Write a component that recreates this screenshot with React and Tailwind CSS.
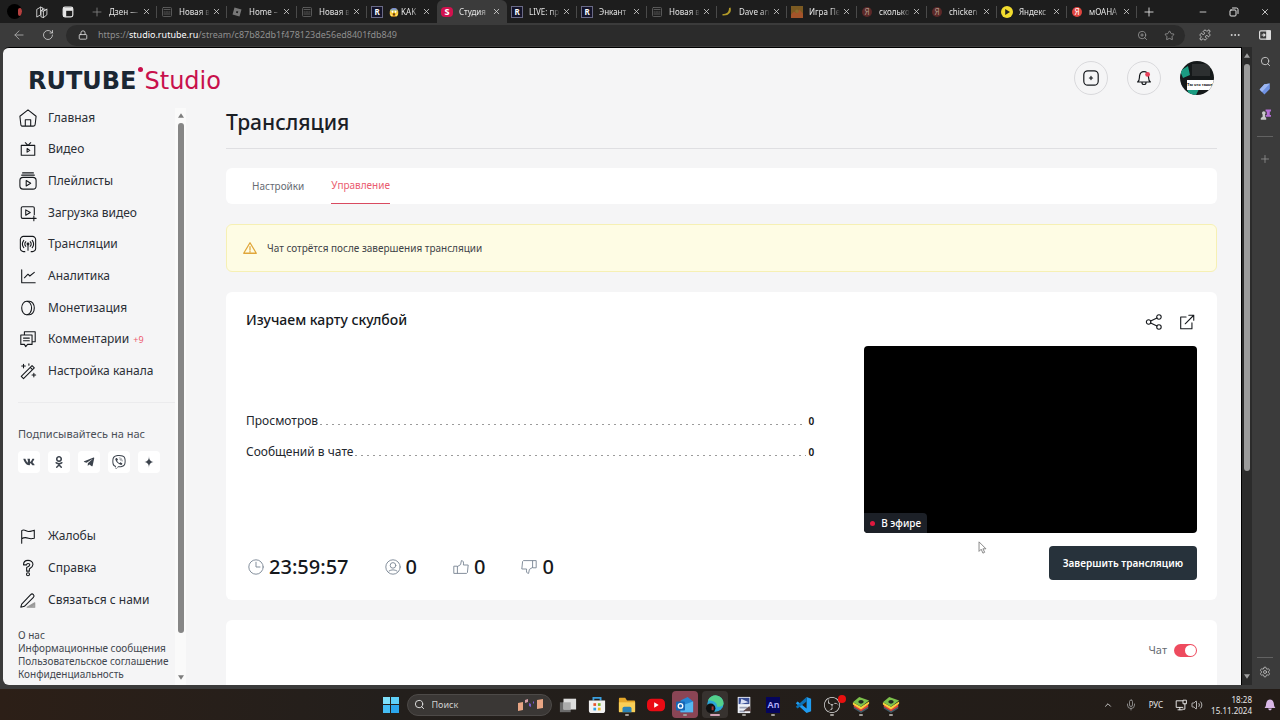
import { FaVk, FaOdnoklassniki, FaTelegramPlane, FaViber } from "react-icons/fa";
import { SiObsstudio } from "react-icons/si";
import {
  ArrowLeft,
  ChevronUp,
  Lock,
  Mic,
  Minus,
  MoreHorizontal,
  Plus,
  Puzzle,
  RotateCw,
  Search,
  Settings,
  Star,
  Volume2,
  X,
  ZoomIn,
} from "lucide-react";

function Icon({ children, className = "size-5", stroke = 1.2 }) {
  return (
    <svg
      viewBox="0 0 20 20"
      className={className}
      fill="none"
      stroke="currentColor"
      strokeWidth={stroke}
      strokeLinejoin="round"
      strokeLinecap="round"
      aria-hidden="true"
    >
      {children}
    </svg>
  );
}

const favicons = {
  dzen: (
    <Icon className="size-2.5 text-[#888]" stroke={1.6}>
      <path d="M10 2v16M2 10h16" />
    </Icon>
  ),
  blank: (
    <Icon className="size-2.5 text-[#666]" stroke={1.6}>
      <rect x="1" y="1" width="18" height="18" rx="2" />
      <path d="M4 5h12M4 10h2M8 10h4M14 10h2M4 14h12" />
    </Icon>
  ),
  roblox: (
    <svg viewBox="0 0 20 20" className="size-2.5" fill="#777" aria-hidden="true">
      <path fillRule="evenodd" d="M5 1l14 4-4 14-14-4zM9 8l-1 3.500 3.500 1 1-3.500z" />
    </svg>
  ),
  rutube: (
    <span className="flex size-3 items-center justify-center border border-[#6a6a86] bg-[#14142b] text-[8px] leading-none font-bold text-white">
      R
    </span>
  ),
  studio: (
    <span className="flex h-2.5 w-3 items-center justify-center rounded-sm bg-[#d2124e] text-[9px] leading-none font-extrabold text-white">
      S
    </span>
  ),
  banana: (
    <svg viewBox="0 0 20 20" className="size-2.5" fill="#b29a28" aria-hidden="true">
      <path d="M17 1c3 9-3 17-16 16v-3c8 0 13-3 13-12z" />
    </svg>
  ),
  game: (
    <svg viewBox="0 0 20 20" className="size-3" aria-hidden="true">
      <path d="M0 0h20v20H0z" fill="#7b5a22" />
      <path d="M0 14l5-5 4 3 5-6 6 7v7H0z" fill="#a4542a" />
      <circle cx="10" cy="9" r="3" fill="#8a6a2c" />
    </svg>
  ),
  yandexDim: (
    <span className="flex size-2.5 items-center justify-center rounded-full bg-[#5c2828] text-[8px] leading-none text-[#a98]">
      Я
    </span>
  ),
  yandex: (
    <span className="flex size-2.5 items-center justify-center rounded-full bg-[#e0443e] text-[8px] leading-none text-white">
      Я
    </span>
  ),
  music: (
    <svg viewBox="0 0 20 20" className="size-3" aria-hidden="true">
      <circle cx="10" cy="10" r="10" fill="#f2dc2e" />
      <path d="M7 5l8 5-8 5z" fill="#222" />
    </svg>
  ),
};

const tabs = [
  { icon: "dzen", title: "Дзен —" },
  { icon: "blank", title: "Новая в" },
  { icon: "roblox", title: "Home –" },
  { icon: "blank", title: "Новая в" },
  { icon: "rutube", title: "😱 KAK" },
  { icon: "studio", title: "Студия", active: true },
  { icon: "rutube", title: "LIVE: пр" },
  { icon: "rutube", title: "Энкант" },
  { icon: "blank", title: "Новая в" },
  { icon: "banana", title: "Dave an" },
  { icon: "game", title: "Игра Пе" },
  { icon: "yandexDim", title: "сколько" },
  { icon: "yandexDim", title: "chicken" },
  { icon: "music", title: "Яндекс" },
  { icon: "yandex", title: "мОАНА" },
];

const navItems = [
  {
    label: "Главная",
    icon: <path d="M3 19a2 2 0 0 1-1-2L1 8l9-7 9 7-1 9a2 2 0 0 1-2 2zM7 19v-7h6v7" />,
  },
  {
    label: "Видео",
    icon: <path d="M2.500 6h15v11h-15zM7 3l3 3 3-3M9 9.500l3 2-3 2z" />,
  },
  {
    label: "Плейлисты",
    icon: (
      <>
        <path d="M4 1h12M3 3.500h14M8 9.500l5 3-5 3z" />
        <rect x="1" y="6" width="18" height="13" rx="3.500" />
      </>
    ),
  },
  {
    label: "Загрузка видео",
    icon: <path d="M13 16H4a1.500 1.500 0 0 1-1.500-1.500v-10A1.500 1.500 0 0 1 4 3h11.500A1.500 1.500 0 0 1 17 4.500V12M7.500 6.500l5 3-5 3zM16.500 13.500v5M14 16h5" />,
  },
  {
    label: "Трансляции",
    icon: (
      <>
        <path d="M6.500 18.500H5A3.500 3.500 0 0 1 1.500 15V5A3.500 3.500 0 0 1 5 1.500h10A3.500 3.500 0 0 1 18.500 5v10a3.500 3.500 0 0 1-3.500 3.500h-1.500" />
        <path d="M7.500 12.500a3.500 3.500 0 0 1 0-5M12.500 7.500a3.500 3.500 0 0 1 0 5M5.300 14a6.500 6.500 0 0 1 0-8M14.700 6a6.500 6.500 0 0 1 0 8M10 11v6" />
        <circle cx="10" cy="10" r="1" />
      </>
    ),
  },
  {
    label: "Аналитика",
    icon: <path d="M3 3v14.500h15M6 12l4-4 2 2 5-4" />,
  },
  {
    label: "Монетизация",
    icon: (
      <>
        <ellipse cx="8.500" cy="10" rx="5.500" ry="7.500" />
        <path d="M9 2.500h2.500c3 0 5.500 3 5.500 7.500s-2.500 7.500-5.500 7.500H9" />
      </>
    ),
  },
  {
    label: "Комментарии",
    badge: "+9",
    icon: <path d="M6 5.500V2h12v11h-3.500M2 5.500h12.500V16H9.500L7.500 18.500 6 16H2zM5 9h6.500M5 12h6.500" />,
  },
  {
    label: "Настройка канала",
    icon: <path d="M2.500 16L14.500 4 17 6.500 5 18.500zM12.500 6l2.500 2.500M5 2.500v4M3 4.500h4M11 2v1.500M16.500 12.500v4M14.500 14.500h4" />,
  },
];

const helpItems = [
  { label: "Жалобы", icon: <path d="M3 18V4c3-2 5 1 7.500 1S15 4 17 3.500v9c-2 .5-4 1-6.500 0S6 11 3 13" /> },
  {
    label: "Справка",
    icon: (
      <>
        <path d="M5 6.500C5 3.500 7 1.500 10 1.500s5.500 2 5.500 4.500S13 10 11.500 11v2.500h-3v-4C11 8.500 12 8 12 6.500S11.500 5 10 5 8.500 5.500 8.500 6.500z" />
        <circle cx="10" cy="17" r="1.700" />
      </>
    ),
  },
  {
    label: "Связаться с нами",
    icon: (
      <>
        <path d="M3 14.500L13 4a2 2 0 0 1 3 3L6 17l-4 1z" />
        <path d="M9 18h8.500v-5zM13 17.500l4-3" fill="#aaa" stroke="#999" />
      </>
    ),
  },
];

const footerLinks = ["О нас", "Информационные сообщения", "Пользовательское соглашение", "Конфиденциальность"];

const socials = [
  { name: "VK", icon: <FaVk className="size-3" /> },
  { name: "OK", icon: <FaOdnoklassniki className="size-3" /> },
  { name: "Telegram", icon: <FaTelegramPlane className="size-3" /> },
  { name: "Viber", icon: <FaViber className="size-3.5" /> },
  {
    name: "Dzen",
    icon: (
      <svg viewBox="0 0 20 20" className="size-3" fill="currentColor" aria-hidden="true">
        <path d="M10 0c0 7-3 10-10 10 7 0 10 3 10 10 0-7 3-10 10-10-7 0-10-3-10-10z" />
      </svg>
    ),
  },
];

const counters = [
  { label: "Зрители", icon: <><circle cx="10" cy="10" r="9" /><circle cx="10" cy="8" r="3.500" /><path d="M5 15c3-2 7-2 10 0" /></> },
  { label: "Нравится", icon: <path d="M1.500 9h4v9h-4zM5.500 9.500L9.500 7l1-5c2.500 0 3 2 2.500 5.500h6L18 17l-1 1H5.500" /> },
  { label: "Не нравится", icon: <path d="M18.500 11h-4V2h4zM14.500 10.500L10.500 13l-1 5C7 18 6.500 16 7 12.500H1L2 3l1-1h11.500" /> },
];

function TabStrip() {
  return (
    <div className="flex h-[23px] shrink-0 items-stretch bg-[#1d1d1d] text-[#e6e6e6]">
      <div className="flex w-[87px] shrink-0 items-center gap-[13px] pl-[7px]">
        <span className="flex size-[15px] items-center justify-end overflow-hidden rounded-full bg-black">
          <span className="h-2 w-1 rounded-xs bg-[#b5403f]" />
        </span>
        <Icon className="size-3.5">
          <path d="M3 6l5-3v11l-5 3zM8 3l3 1v3M9 8l4-3v3l4-2v8l-5 4-3-1zM9 8l3 1v9M12 9l5-3" />
        </Icon>
        <Icon className="size-3" stroke={2}>
          <rect x="2" y="2" width="16" height="16" rx="3" />
          <path d="M3 4h14v3H3zM3 4h3v13H3z" fill="currentColor" />
        </Icon>
      </div>
      {tabs.map((tab, i) => (
        <div
          key={i}
          className={
            tab.active
              ? "flex w-[70px] min-w-0 items-center rounded-t-md bg-[#3b3b3b] pl-1"
              : "flex w-[70px] min-w-0 items-center pl-1"
          }
        >
          <button className="flex min-w-0 flex-1 items-center gap-1.5 text-left">
            <span className="flex w-3 shrink-0 justify-center">{favicons[tab.icon]}</span>
            <span className="flex-1 mask-r-from-70% text-[8px] leading-4 whitespace-nowrap">{tab.title}</span>
          </button>
          <button aria-label="Закрыть вкладку" className="flex w-3 shrink-0 justify-center">
            <X className="size-[9px]" />
          </button>
          <span className={tab.active || i === 4 ? "ml-1 h-3 w-px" : "ml-1 h-3 w-px bg-[#4a4a4a]"} />
        </div>
      ))}
      <button aria-label="Новая вкладка" className="flex w-6 items-center justify-center">
        <Plus className="size-3.5" strokeWidth={1.5} />
      </button>
      <div className="ml-auto flex w-[93px] shrink-0">
        <button aria-label="Свернуть" className="flex flex-1 items-center justify-center">
          <Minus className="size-2.5" />
        </button>
        <button aria-label="Развернуть" className="flex flex-1 items-center justify-center">
          <Icon className="size-2.5" stroke={2}>
            <rect x="2" y="6" width="12" height="12" rx="2" />
            <path d="M7 2h8a3 3 0 0 1 3 3v8" />
          </Icon>
        </button>
        <button aria-label="Закрыть" className="flex flex-1 items-center justify-center">
          <X className="size-2.5" />
        </button>
      </div>
    </div>
  );
}

function Toolbar() {
  return (
    <div className="flex h-6 shrink-0 items-center bg-[#3b3b3b] text-[#ddd]">
      <button aria-label="Назад" className="flex w-[38px] justify-center text-[#aaa]">
        <ArrowLeft className="size-3.5" strokeWidth={1.5} />
      </button>
      <button aria-label="Обновить" className="flex w-5 justify-center">
        <RotateCw className="size-3" strokeWidth={1.5} />
      </button>
      <div className="ml-2 flex h-[21px] flex-1 items-center rounded-full bg-[#2b2b2b] pr-2.5 pl-3">
        <Lock className="size-2.5" />
        <span className="ml-2.5 text-[9px] leading-4 text-[#8f8f8f]">
          https://<span className="text-white">studio.rutube.ru</span>/stream/c87b82db1f478123de56ed8401fdb849
        </span>
        <div className="ml-auto flex gap-4 text-[#aaa]">
          <ZoomIn className="size-[11px]" strokeWidth={1.5} />
          <Star className="size-[11px]" strokeWidth={1.5} />
        </div>
      </div>
      <div className="flex w-[95px] items-center justify-between pr-[9px] pl-3.5">
        <Puzzle className="size-3" strokeWidth={1.5} />
        <MoreHorizontal className="size-3" />
        <Icon className="size-3" stroke={2}>
          <rect x="1" y="3" width="18" height="14" rx="2" />
          <path d="M13 3h6v14h-6z" fill="currentColor" />
          <path d="M5 10h5M8 8l2 2-2 2" />
        </Icon>
      </div>
    </div>
  );
}

function Arrow({ down, className }) {
  return (
    <svg viewBox="0 0 8 6" className={className} fill="currentColor" aria-hidden="true">
      <path d={down ? "M0 0h8L4 6z" : "M4 0l4 6H0z"} />
    </svg>
  );
}

function NavLink({ item }) {
  return (
    <a
      href="#"
      className="flex items-center gap-[11px] text-[12px] leading-5 whitespace-nowrap text-[#2b2f36]"
    >
      <Icon className="size-[18px] shrink-0 text-[#15181c]">{item.icon}</Icon>
      <span>
        {item.label}
        {item.badge && <span className="ml-1 text-[9px] text-[#ed5b6f]">{item.badge}</span>}
      </span>
    </a>
  );
}

function Sidebar() {
  return (
    <aside className="flex w-[183px] shrink-0 overflow-hidden">
      <div className="flex flex-1 flex-col pl-[15px]">
        <nav className="ml-px grid h-[285px] shrink-0 grid-rows-9">
          {navItems.map((item) => (
            <NavLink key={item.label} item={item} />
          ))}
        </nav>
        <div className="mt-[15px] h-px shrink-0 bg-[#ebebed]" />
        <p className="mt-[21px] text-[11px] leading-5 whitespace-nowrap text-[#4a4f57]">Подписывайтесь на нас</p>
        <div className="mt-[7px] flex gap-2">
          {socials.map((s) => (
            <a
              key={s.name}
              href="#"
              aria-label={s.name}
              className="flex size-[22px] items-center justify-center rounded bg-white text-[#3c434d]"
            >
              {s.icon}
            </a>
          ))}
        </div>
        <nav className="mt-[47px] ml-px grid shrink-0 auto-rows-[32px]">
          {helpItems.map((item) => (
            <NavLink key={item.label} item={item} />
          ))}
        </nav>
        <div className="mt-[13px] flex flex-col text-[10px] leading-[13px] whitespace-nowrap text-[#42474f]">
          {footerLinks.map((link) => (
            <a key={link} href="#">
              {link}
            </a>
          ))}
        </div>
      </div>
      <div className="mt-1.5 flex w-[11px] shrink-0 flex-col items-center bg-[#fafafa] py-[5px] text-[#7d7d7d]">
        <Arrow className="h-[5px] w-1.5 shrink-0" />
        <div className="mt-[5px] h-[90%] w-1.5 rounded-full bg-[#868686]" />
        <Arrow down className="mt-auto h-[5px] w-1.5 shrink-0" />
      </div>
    </aside>
  );
}

function PageHeader() {
  return (
    <header className="flex h-[54px] shrink-0 items-center justify-between pt-1.5 pr-[27px] pl-[25px]">
      <a
        href="#"
        className="relative mt-1.5 flex items-center gap-2 font-['DejaVu_Sans'] text-[24px] leading-7 text-[#1b2733]"
      >
        <span className="font-bold">RUTUBE</span>
        <span className="text-[#c8104c]">Studio</span>
        <span className="absolute top-0 left-[110px] size-[5px] rounded-full bg-[#c8104c]" />
      </a>
      <div className="flex gap-[19px] text-[#15181c]">
        <button
          aria-label="Создать"
          className="flex size-[34px] items-center justify-center rounded-full border border-[#d9d9dc]"
        >
          <Icon className="size-4" stroke={1.5}>
            <rect x="1" y="1" width="18" height="18" rx="5" />
            <path d="M10 8v4M8 10h4" />
          </Icon>
        </button>
        <button
          aria-label="Уведомления"
          className="flex size-[34px] items-center justify-center rounded-full border border-[#d9d9dc]"
        >
          <Icon className="size-4" stroke={1.5}>
            <path d="M2 15c3-2 2-5 2.500-8S7 2 10 2s5 2 5.500 5-.5 6 2.500 8zM7.500 15.500c0 3.500 5 3.500 5 0" />
            <circle cx="14.500" cy="5.500" r="3" fill="#e8405a" stroke="none" />
          </Icon>
        </button>
        <button
          aria-label="Профиль"
          className="relative size-[34px] overflow-hidden rounded-full bg-[#15191a]"
        >
          <svg viewBox="0 0 34 34" className="absolute inset-0" aria-hidden="true">
            <path d="M0 10l8-5 2 9-7 3zM7 28h12l-3 6H9z" fill="#1b9c82" />
            <path d="M12 3h18v12H12z" fill="#2c2f30" />
            <path d="M7 19h27v10H7z" fill="#fff" />
          </svg>
          <span className="absolute bottom-[6px] left-[7px] font-['Liberation_Sans'] text-[4px] leading-[8px] font-bold whitespace-nowrap text-black">
            Ты что такое?
          </span>
        </button>
      </div>
    </header>
  );
}

function StatRow({ label, value }) {
  return (
    <div className="flex h-[31px] items-center text-[12px] leading-5 text-[#23272e]">
      <span>{label}</span>
      <span className="mt-1.5 ml-0.5 h-px flex-1 bg-[repeating-linear-gradient(90deg,#9b9b9b_0_2px,transparent_2px_6px)]" />
      <span className="ml-0.5 text-[10px] font-semibold text-[#111]">{value}</span>
    </div>
  );
}

function StreamCard() {
  return (
    <section className="relative rounded-md bg-white p-5">
      <div className="flex h-5 items-start justify-between">
        <h2 className="text-[14px] leading-4 font-medium text-[#15181c]">Изучаем карту скулбой</h2>
        <div className="mt-px flex gap-[15px] pr-px text-[#15181c]">
          <button aria-label="Поделиться">
            <Icon className="size-[18px]">
              <circle cx="4" cy="10" r="2.500" />
              <circle cx="15.500" cy="4.500" r="2.500" />
              <circle cx="15.500" cy="15.500" r="2.500" />
              <path d="M6.300 9l7-3.500M6.300 11l7 3.500" />
            </Icon>
          </button>
          <button aria-label="Открыть">
            <Icon className="size-[18px]">
              <path d="M9 4.500H3v13h12.500V11M8 12l9.500-9.500M12 2.500h5.500V8" />
            </Icon>
          </button>
        </div>
      </div>
      <div className="mt-3.5 flex gap-[50px]">
        <div className="flex flex-1 flex-col justify-center pb-1.5">
          <StatRow label="Просмотров" value="0" />
          <StatRow label="Сообщений в чате" value="0" />
        </div>
        <div className="relative aspect-video w-[35%] overflow-hidden rounded bg-black">
          <div className="absolute bottom-0 left-0 flex h-5 items-center gap-1.5 rounded-tr bg-[#1c2027] px-1.5 text-[10px] leading-4 font-medium text-white">
            <span className="size-[5px] rounded-full bg-[#e0193f]" />
            В эфире
          </div>
        </div>
      </div>
      <div className="mt-[13px] flex items-center justify-between">
        <div className="mt-2 flex gap-9 pl-0.5 text-[20px] leading-6 font-medium text-[#15181c]">
          <span className="flex items-center gap-[5px]">
            <Icon className="size-4 text-[#7f8b99]">
              <circle cx="10" cy="10" r="9" />
              <path d="M10 4v6h5" />
            </Icon>
            23:59:57
          </span>
          {counters.map((c) => (
            <span key={c.label} className="flex items-center gap-[5px]">
              <Icon className="size-4 text-[#7f8b99]">{c.icon}</Icon>0
            </span>
          ))}
        </div>
        <button className="h-[34px] rounded bg-[#27323b] px-3.5 text-[10px] leading-4 font-semibold text-white">
          Завершить трансляцию
        </button>
      </div>
      <svg
        viewBox="0 0 10 15"
        className="absolute right-[230px] bottom-[46px] h-[13px] w-[9px]"
        fill="#fff"
        stroke="#777"
        aria-hidden="true"
      >
        <path d="M1 1v11l2.500-2.500L5.500 14l2-1-2-4H9z" />
      </svg>
    </section>
  );
}

function Content() {
  return (
    <main className="min-w-0 flex-1 overflow-hidden pr-6 pl-10">
      <h1 className="mb-[19px] h-[47px] border-b border-[#dfdfe2] text-[21px] leading-10 font-medium text-[#1b2026]">
        Трансляция
      </h1>
      <div className="flex flex-col gap-5">
        <div className="flex h-9 gap-[27px] rounded-md bg-white px-[26px] text-[10px] leading-[35px]">
          <button className="text-[#666b73]">Настройки</button>
          <button className="border-b border-[#d94a60] text-[#ea5c70]">Управление</button>
        </div>
        <div className="flex h-12 items-center gap-2.5 rounded-md border border-[#f6f0b4] bg-[#fefce4] px-4 text-[10px] text-[#3f4348]">
          <Icon className="size-3.5 text-[#e0a63a]" stroke={1.8}>
            <path d="M10 2.500L1 17.500h18zM10 8v5M10 15v.5" />
          </Icon>
          Чат сотрётся после завершения трансляции
        </div>
        <StreamCard />
        <section className="flex h-40 justify-end rounded-t-md bg-white p-5">
          <label className="flex h-5 items-center gap-[7px] text-[11px] text-[#666b73]">
            Чат
            <input
              type="checkbox"
              defaultChecked
              className="relative h-[13px] w-[23px] appearance-none rounded-full bg-[#c4c4c8] before:absolute before:top-px before:left-px before:size-[11px] before:rounded-full before:bg-white checked:bg-[#ee4b5e] checked:before:left-[11px]"
            />
          </label>
        </section>
      </div>
    </main>
  );
}

function EdgeSidebar() {
  return (
    <div className="flex w-7 shrink-0 flex-col items-center bg-[#3b3b3b] pr-0.5 text-[#ccc]">
      <button aria-label="Поиск" className="mt-[9px]">
        <Search className="size-[11px]" />
      </button>
      <button aria-label="Покупки" className="mt-4">
        <svg viewBox="0 0 20 20" className="size-3" aria-hidden="true">
          <path d="M9 2l9-1v9l-9 9-8-8z" fill="#6f92e3" />
          <path d="M9 2l9-1-13 14-4-4z" fill="#9db7f2" />
        </svg>
      </button>
      <button aria-label="Игры" className="mt-3.5">
        <svg viewBox="0 0 20 20" className="size-3" aria-hidden="true">
          <path d="M11 1h9v3h-2v6h2v3h-9v-3h2V4h-2z" fill="#b56fd6" />
          <path d="M4 18h8v-3l-2-2V9a3 3 0 1 0-4 0v4l-3 2v3z" fill="#c9c9c9" />
        </svg>
      </button>
      <div className="mt-[15px] h-px w-4 bg-[#626262]" />
      <button aria-label="Добавить" className="mt-4">
        <Plus className="size-3 text-[#999]" strokeWidth={1.5} />
      </button>
      <div className="mt-auto h-px w-4 bg-[#626262]" />
      <button aria-label="Настройки" className="mt-2 mb-[7px]">
        <Settings className="size-3" strokeWidth={1.5} />
      </button>
    </div>
  );
}

function BlueStacks() {
  return (
    <svg viewBox="0 0 20 20" className="size-[18px]" aria-hidden="true">
      <path d="M2 14l8 5 8-5v-3l-8 5-8-5z" fill="#3d5a66" />
      <path d="M2 12l8 5 8-5V9l-8 5-8-5z" fill="#e04438" />
      <path d="M1 9.500l9 5.500 9-6.500V6l-9 6-9-5z" fill="#f4d23b" />
      <path d="M8 1l11 4-9 7-9-5z" fill="#7cc04b" />
      <ellipse cx="10" cy="6.500" rx="3" ry="2" fill="#1f2a22" />
    </svg>
  );
}

const apps = [
  {
    name: "Представление задач",
    icon: (
      <svg viewBox="0 0 20 20" className="size-[18px]" aria-hidden="true">
        <path d="M1 7h12v11H1z" fill="#6b6b6b" />
        <path d="M5 3h14v12H5z" fill="#dedede" />
        <path d="M5 7h8v8H5z" fill="#ababab" />
      </svg>
    ),
  },
  {
    name: "Store",
    icon: (
      <svg viewBox="0 0 20 20" className="size-[18px]" aria-hidden="true">
        <path d="M6 5V2h8v3" fill="none" stroke="#3ba0e0" strokeWidth="2" />
        <path d="M1 5h18v11a3 3 0 0 1-3 3H4a3 3 0 0 1-3-3z" fill="#f1f1f1" />
        <path d="M6 8h3v3H6z" fill="#e8542b" />
        <path d="M11 8h3v3h-3z" fill="#7cb928" />
        <path d="M6 13h3v3H6z" fill="#2f9fe3" />
        <path d="M11 13h3v3h-3z" fill="#f3b71c" />
      </svg>
    ),
  },
  {
    name: "Проводник",
    running: true,
    icon: (
      <svg viewBox="0 0 20 20" className="size-[18px]" aria-hidden="true">
        <path d="M1 3a1 1 0 0 1 1-1h6l2 3h8a1 1 0 0 1 1 1v11H1z" fill="#e5a72a" />
        <path d="M1 7h18v11H1z" fill="#f9cf57" />
        <path d="M5 18v-4a2 2 0 0 1 2-2h6a2 2 0 0 1 2 2v4z" fill="#2a83b8" />
      </svg>
    ),
  },
  {
    name: "YouTube",
    icon: (
      <svg viewBox="0 0 20 20" className="size-[18px]" aria-hidden="true">
        <rect y="3" width="20" height="14" rx="5" fill="#ea0b14" />
        <path d="M8 7l5 3-5 3z" fill="#fff" />
      </svg>
    ),
  },
  {
    name: "Outlook",
    running: true,
    tile: "bg-[#8a4555]",
    icon: (
      <svg viewBox="0 0 20 20" className="size-[18px]" aria-hidden="true">
        <path d="M5 5l8-4 6 5v12H5z" fill="#2486d4" />
        <path d="M5 11l14-5v12H5z" fill="#56b8f1" />
        <rect y="6" width="10" height="10" rx="1" fill="#1567b5" />
        <circle cx="5" cy="11" r="2.500" fill="none" stroke="#fff" strokeWidth="1.500" />
      </svg>
    ),
  },
  {
    name: "Edge",
    active: true,
    tile: "bg-[#37322f]",
    icon: (
      <svg viewBox="0 0 20 20" className="size-[19px]" aria-hidden="true">
        <circle cx="11" cy="9" r="8.500" fill="#2ba6d8" />
        <path d="M3 6a8.500 8.500 0 0 1 16.500 3c0 3-4 4-7 3 1-4-5-7-9.500-6z" fill="#53d18b" />
        <circle cx="6" cy="14" r="5" fill="#111" />
        <path d="M7 12h2v4H7z" fill="#a03737" />
      </svg>
    ),
  },
  {
    name: "Редактор",
    running: true,
    icon: (
      <svg viewBox="0 0 20 20" className="size-[18px]" aria-hidden="true">
        <path d="M3 1h14v18H3z" fill="#eef0f7" />
        <path d="M4 2h12v7H4z" fill="#3a4f96" />
        <path d="M7 3l8 4-9 2z" fill="#d9dff4" />
        <path d="M5 12h9v2H5zM5 16h6v2H5z" fill="#9aa0b5" />
        <path d="M9 17l7-6 2 6z" fill="#5b4545" />
      </svg>
    ),
  },
  {
    name: "Animate",
    running: true,
    icon: (
      <span className="flex h-4 w-3.5 items-center justify-center bg-[#05055c] text-[9px] leading-none font-semibold text-[#b9b4ff]">
        An
      </span>
    ),
  },
  {
    name: "Visual Studio Code",
    icon: (
      <svg viewBox="0 0 20 20" className="size-[18px]" aria-hidden="true">
        <path d="M14 1l5 2v14l-5 2L2 8l2-2 10 8z" fill="#1f9cf0" />
        <path d="M14 1v5L4 14l-2-2z" fill="#0a72b8" />
      </svg>
    ),
  },
  {
    name: "OBS Studio",
    running: true,
    icon: (
      <span className="relative">
        <SiObsstudio className="size-4 text-[#ddd]" />
        <span className="absolute -top-0.5 -right-1.5 size-2 rounded-full bg-[#e8100f]" />
      </span>
    ),
  },
  { name: "BlueStacks", running: true, icon: <BlueStacks /> },
  { name: "BlueStacks Manager", running: true, icon: <BlueStacks /> },
];

function Taskbar() {
  return (
    <footer className="grid h-[31px] shrink-0 grid-cols-[1fr_auto_1fr] items-center bg-linear-to-r from-[#2c1f17] via-[#231f1c] via-30% to-[#231c17] text-[#e8e8e8]">
      <div />
      <div className="flex h-full items-center">
        <button aria-label="Пуск" className="flex w-8 justify-center">
          <span className="grid size-4 grid-cols-2 gap-px">
            <span className="bg-[#7fe0fb]" />
            <span className="bg-[#5fd0f8]" />
            <span className="bg-[#45bdf3]" />
            <span className="bg-[#2ba6ec]" />
          </span>
        </button>
        <label className="flex h-[22px] w-[145px] items-center gap-[7px] rounded-full border border-[#4d4a48] bg-[#3a3735] px-1.5">
          <Search className="size-[11px] shrink-0" />
          <input
            aria-label="Поиск"
            placeholder="Поиск"
            className="min-w-0 flex-1 bg-transparent text-[9px] leading-4 outline-none placeholder:text-[#cfcfcf]"
          />
          <svg viewBox="0 0 28 14" className="h-3.5 w-7 shrink-0" aria-hidden="true">
            <path d="M1 5l5-1v8l-5 1zM20 2l6-1v9l-6 1z" fill="#e8a584" />
            <path d="M8 2l3-1v3l-3 1z" fill="#d9a0a8" />
            <path d="M12 5l2 1v3l-2-1zM16 3l1 1v2l-1-1z" fill="#7d5bd0" />
          </svg>
        </label>
        <div className="ml-0.5 grid h-full w-[352px] grid-cols-12">
          {apps.map((app) => (
            <button key={app.name} aria-label={app.name} className="relative flex items-center justify-center">
              <span
                className={`flex h-[27px] w-[26px] items-center justify-center rounded ${app.tile || ""}`}
              >
                {app.icon}
              </span>
              {app.running && <span className="absolute bottom-1 h-0.5 w-1 rounded-full bg-[#a09c98]" />}
              {app.active && <span className="absolute bottom-1 h-0.5 w-2.5 rounded-full bg-[#d3a3b6]" />}
            </button>
          ))}
        </div>
      </div>
      <div className="flex items-center justify-end pr-1">
        <ChevronUp className="size-2.5" />
        <Mic className="ml-3 size-3 text-[#aaa]" strokeWidth={1.5} />
        <span className="ml-3 text-[8px] leading-4">РУС</span>
        <Icon className="ml-3 size-3" stroke={1.6}>
          <path d="M13 3H2v11h11M5 18h7M8 14v4M14 2h5v6h-5zM16.500 8v9H13" />
        </Icon>
        <Volume2 className="ml-1 size-3" strokeWidth={1.5} />
        <div className="ml-2 text-right text-[8px] leading-[11px]">
          <div>18:28</div>
          <div>15.11.2024</div>
        </div>
        <svg viewBox="0 0 20 20" className="ml-3 size-3" fill="#d8b7e6" aria-hidden="true">
          <path d="M1 15c3-3 2-6 3-9s3-5 6-5 5 2 6 5 0 6 3 9zM7 16h6a3 3 0 0 1-6 0z" />
        </svg>
      </div>
    </footer>
  );
}

export default function App() {
  return (
    <div className="flex h-screen flex-col overflow-hidden bg-[#3b3b3b] font-['Noto_Sans','Open_Sans',sans-serif]">
      <TabStrip />
      <Toolbar />
      <div className="flex min-h-0 flex-1 pb-1 pl-[3px]">
        <div className="flex min-w-0 flex-1 flex-col overflow-hidden rounded-l-md border-t border-r border-black bg-[#f5f5f6]">
          <PageHeader />
          <div className="flex min-h-0 flex-1">
            <Sidebar />
            <Content />
          </div>
        </div>
        <div className="flex w-[10px] shrink-0 flex-col items-center bg-[#2b2b2b] py-1.5 text-[#a0a0a0]">
          <Arrow className="h-[5px] w-1.5 shrink-0" />
          <div className="mt-1.5 h-[65%] w-1.5 rounded-full bg-[#9b9b9b]" />
          <Arrow down className="mt-auto h-[5px] w-1.5 shrink-0" />
        </div>
        <EdgeSidebar />
      </div>
      <Taskbar />
    </div>
  );
}
